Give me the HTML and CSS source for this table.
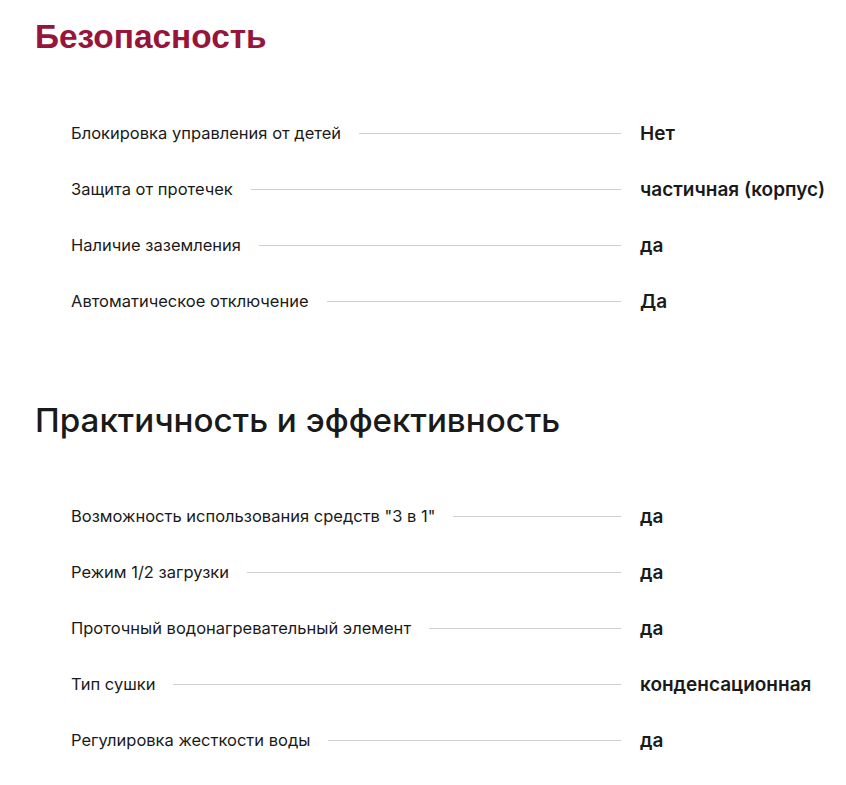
FILE: index.html
```html
<!DOCTYPE html>
<html lang="ru">
<head>
<meta charset="utf-8">
<link rel="stylesheet" href="styles.css">
</head>
<body>
<div class="page">
  <section class="group">
    <h2 class="title title-red">Безопасность</h2>
    <ul class="specs">
      <li class="row"><span class="label">Блокировка управления от детей</span><span class="line"></span><span class="value">Нет</span></li>
      <li class="row"><span class="label">Защита от протечек</span><span class="line"></span><span class="value">частичная (корпус)</span></li>
      <li class="row"><span class="label">Наличие заземления</span><span class="line"></span><span class="value">да</span></li>
      <li class="row"><span class="label">Автоматическое отключение</span><span class="line"></span><span class="value">Да</span></li>
    </ul>
  </section>
  <section class="group">
    <h2 class="title title-dark">Практичность и эффективность</h2>
    <ul class="specs">
      <li class="row"><span class="label">Возможность использования средств "3 в 1"</span><span class="line"></span><span class="value">да</span></li>
      <li class="row"><span class="label">Режим 1/2 загрузки</span><span class="line"></span><span class="value">да</span></li>
      <li class="row"><span class="label">Проточный водонагревательный элемент</span><span class="line"></span><span class="value">да</span></li>
      <li class="row"><span class="label">Тип сушки</span><span class="line"></span><span class="value">конденсационная</span></li>
      <li class="row"><span class="label">Регулировка жесткости воды</span><span class="line"></span><span class="value">да</span></li>
    </ul>
  </section>
</div>
</body>
</html>
```
FILE: styles.css
```css
html, body {
  margin: 0;
  padding: 0;
  background: #fff;
}
.page {
  padding: 18px 0 0 35px;
  font-family: Inter, "Noto Sans", sans-serif;
  color: #1a1a1a;
}
.group {
  margin: 0;
}
.group + .group {
  margin-top: 88px;
}
.title {
  margin: 0;
  line-height: 38px;
}
.title-red {
  font-family: "Liberation Sans", Arial, sans-serif;
  font-weight: 700;
  font-size: 33.4px;
  color: #97153a;
}
.title-dark {
  font-family: Inter, sans-serif;
  font-weight: 500;
  font-size: 33.2px;
  color: #1a1a1a;
}
.specs {
  list-style: none;
  margin: 65px 0 0;
  padding: 0 0 0 36px;
  display: flex;
  flex-direction: column;
  gap: 32px;
}
.row {
  display: flex;
  align-items: center;
  height: 24px;
}
.label {
  font-size: 16.5px;
  font-weight: 400;
  white-space: nowrap;
}
.line {
  flex: 1;
  height: 1px;
  background: #cfcfcf;
  margin: 0 19px 0 18px;
}
.value {
  width: 206px;
  flex: none;
  font-size: 19px;
  font-weight: 600;
  white-space: nowrap;
}
```
